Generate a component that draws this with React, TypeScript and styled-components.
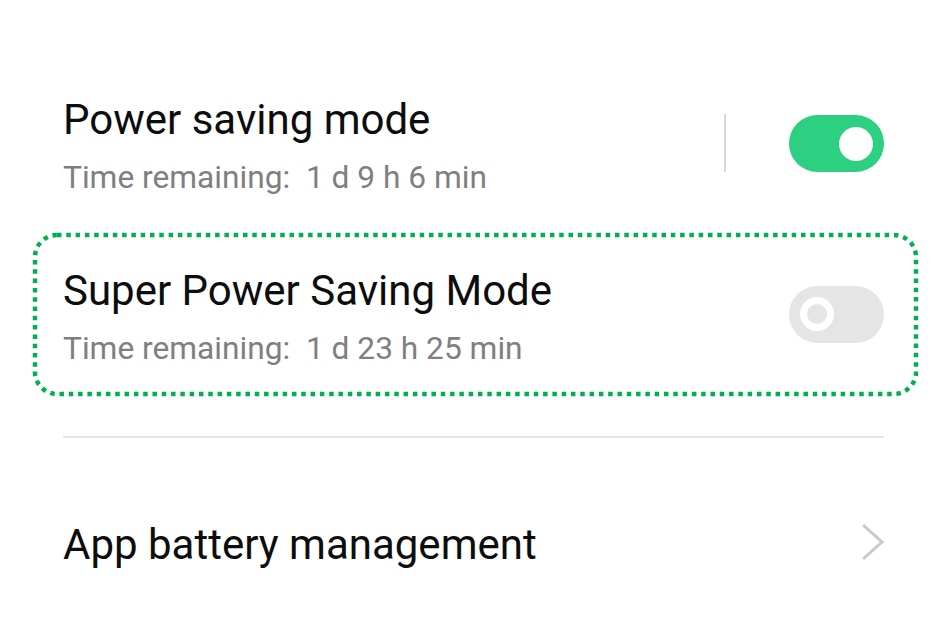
import styled, { createGlobalStyle } from 'styled-components'

const GlobalStyle = createGlobalStyle`
    html, body {
        margin: 0;
        padding: 0;
        background: #FFFFFF;
    }
    body {
        font-family: Roboto, "Noto Sans", sans-serif;
        -webkit-font-smoothing: antialiased;
    }
`

const Page = styled.div`
    width: 947px;
    height: 628px;
    box-sizing: border-box;
    padding: 88px 63px 0 63px;
    overflow: hidden;
`

const Row = styled.div<{ $highlight?: boolean }>`
    position: relative;
    display: flex;
    align-items: center;
    box-sizing: border-box;
    margin: ${p => (p.$highlight ? '29px -34px 0 -30px' : '0')};
    padding: ${p => (p.$highlight ? '4px 34px 0 30px' : '0')};
    height: ${p => (p.$highlight ? '163px' : '116px')};
`

const TextCol = styled.div`
    flex: 1;
    display: flex;
    flex-direction: column;
    gap: 18px;
`

const Title = styled.div`
    font-size: 42px;
    line-height: 46px;
    color: #0d0d0d;
`

const Subtitle = styled.div`
    font-size: 31.7px;
    line-height: 34px;
    color: #7f7f7f;
    white-space: pre;
`

const VDivider = styled.div`
    width: 2px;
    height: 58px;
    background: #d6d6d6;
    margin-right: 63px;
    align-self: flex-start;
    margin-top: 26px;
`

const Toggle = styled.div<{ $on?: boolean }>`
    width: 95px;
    height: 57px;
    border-radius: 29px;
    background: ${p => (p.$on ? '#2dcf80' : '#e5e5e5')};
    display: flex;
    align-items: center;
    justify-content: ${p => (p.$on ? 'flex-end' : 'flex-start')};
    padding: 0 11px;
    box-sizing: border-box;
    margin-bottom: 5px;
`

const Knob = styled.div<{ $on?: boolean }>`
    width: 34px;
    height: 34px;
    border-radius: 50%;
    box-sizing: border-box;
    background: ${p => (p.$on ? '#FFFFFF' : '#e5e5e5')};
    border: ${p => (p.$on ? 'none' : '7px solid #FFFFFF')};
`

const Outline = styled.svg`
    position: absolute;
    inset: 0;
    width: 100%;
    height: 100%;
    pointer-events: none;
    overflow: visible;
`

const HDivider = styled.div`
    height: 2px;
    background: #e6e6e6;
    margin-top: 40px;
`

const LinkRow = styled.div`
    display: flex;
    align-items: center;
    justify-content: space-between;
    height: 60px;
    margin-top: 77px;
`

const ChevronBox = styled.svg`
    margin-bottom: 6px;
`

function DottedFrame() {
    return (
        <Outline viewBox="0 0 885 163" preserveAspectRatio="none">
            <rect
                x="2"
                y="2"
                width="881"
                height="159"
                rx="22"
                fill="none"
                stroke="#00b04f"
                strokeWidth="4.5"
                strokeDasharray="4.5 4.8"
            />
        </Outline>
    )
}

function Chevron() {
    return (
        <ChevronBox width="22" height="38" viewBox="0 0 22 38">
            <polyline points="1,2 20,19 1,36" fill="none" stroke="#c9c9c9" strokeWidth="3" />
        </ChevronBox>
    )
}

export default function App() {
    return (
        <>
            <GlobalStyle />
            <Page>
                <Row>
                    <TextCol>
                        <Title>Power saving mode</Title>
                        <Subtitle>Time remaining:  1 d 9 h 6 min</Subtitle>
                    </TextCol>
                    <VDivider />
                    <Toggle $on>
                        <Knob $on />
                    </Toggle>
                </Row>
                <Row $highlight>
                    <DottedFrame />
                    <TextCol>
                        <Title>Super Power Saving Mode</Title>
                        <Subtitle>Time remaining:  1 d 23 h 25 min</Subtitle>
                    </TextCol>
                    <Toggle>
                        <Knob />
                    </Toggle>
                </Row>
                <HDivider />
                <LinkRow>
                    <Title>App battery management</Title>
                    <Chevron />
                </LinkRow>
            </Page>
        </>
    )
}
